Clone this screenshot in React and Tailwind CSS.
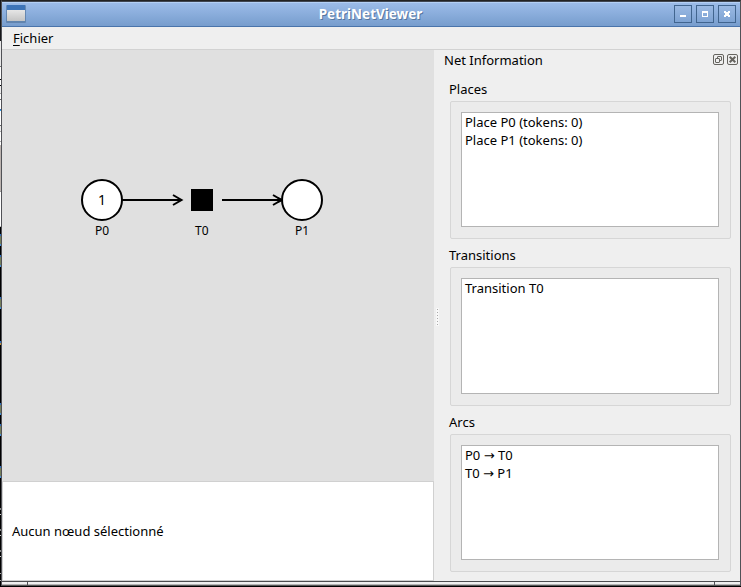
import React from "react";

// Slivers of the windows behind: [height, colour]
const BACKDROP = [
  [41, "#17171a"], [25, "#e8e8e8"], [1, "#777"], [12, "#fff"], [1, "#000"], [5, "#fff"], [1, "#000"],
  [7, "#eee"], [1, "#aaa"], [5, "#fff"], [1, "#666"], [9, "#fff"], [1, "#2f6fb8"], [1, "#35a5f0"], [14, "#fff"],
  [1, "#666"], [5, "#eee"], [1, "#aaa"], [9, "#fff"], [1, "#aaa"], [3, "#fff"], [46, "#bcb4b0"], [1, "#999"],
  [34, "#fff"], [1, "#bbb"], [7, "#000"], [2, "#2f6fc0"], [8, "#77805c"], [2, "#4a90d8"], [9, "#000"],
  [2, "#2f6fc0"], [8, "#77805c"], [2, "#4a90d8"], [30, "#000"], [2, "#2f6fc0"], [8, "#77805c"], [2, "#4a90d8"],
  [32, "#000"], [2, "#2f6fc0"], [2, "#c09040"], [58, "#000"], [2, "#2f6fc0"], [8, "#77805c"], [2, "#4a90d8"],
  [9, "#000"], [2, "#2f6fc0"], [8, "#77805c"], [2, "#4a90d8"], [30, "#000"], [2, "#2f6fc0"], [8, "#77805c"],
  [2, "#4a90d8"], [30, "#000"], [2, "#888"], [4, "#000"], [1, "#ccc"], [14, "#000"], [2, "#888"], [4, "#000"],
  [1, "#ccc"], [14, "#000"], [2, "#888"], [4, "#000"], [1, "#ccc"], [16, "#000"], [1, "#aaa"], [6, "#000"], [1, "#aaa"],
];

function TitleButton({ children }) {
  return (
    <div className="h-[18px] w-[18px] border border-[#41658f] bg-linear-to-b from-[#9ab9e3] to-[#7ea3d3]">
      <svg width="16" height="16" viewBox="0 0 16 16" shapeRendering="crispEdges">{children}</svg>
    </div>
  );
}

function Group({ title, items, boxClass = "h-[138px] pb-[11px]" }) {
  return (
    <section>
      <h2 className="h-[20px] pl-[1px] text-[13px] leading-[16px]">{title}</h2>
      <div className={`ml-[2px] flex w-[281px] rounded-[2px] border border-[#d6d6d6] bg-[#ebebeb] pt-[10px] pl-[10px] ${boxClass}`}>
        <ul className="w-[258px] border border-[#b4b4b4] bg-white pl-[3px]">
          {items.map((item) => (
            <li key={item} className="h-[18px] text-[13px] leading-[18px]">{item}</li>
          ))}
        </ul>
      </div>
    </section>
  );
}

function NetCanvas() {
  return (
    <svg width="432" height="431" viewBox="2 50 432 431" className="block bg-[#e0e0e0]">
      <g stroke="#000" strokeWidth="2" fill="none">
        <path d="M122 200H181M173 195L181.500 200L173 205" />
        <path d="M222 200H281M273 195L281.500 200L273 205" />
        <circle cx="102" cy="200" r="20" fill="#fff" />
        <circle cx="302" cy="200" r="20" fill="#fff" />
        <path d="M278 198L281.500 200L278 202" />
      </g>
      <rect x="191" y="189" width="22" height="22" fill="#000" />
      <g textAnchor="middle" fill="#000">
        <text x="102" y="205" fontSize="14">1</text>
        <g fontSize="12">
          <text x="102" y="235">P0</text>
          <text x="201.800" y="235">T0</text>
          <text x="302" y="235">P1</text>
        </g>
      </g>
    </svg>
  );
}

export default function App() {
  return (
    <div className="flex h-[587px] w-[741px] overflow-hidden bg-black font-['Noto_Sans','DejaVu_Sans',sans-serif] text-[13px] text-black">
      <div className="w-px shrink-0">
        {BACKDROP.map(([height, backgroundColor], i) => (
          <div key={i} style={{ height, backgroundColor }} />
        ))}
      </div>
      <div className="h-[586px] w-[740px] border-x border-t border-x-[#505156] border-t-[#222]">
        <header className="flex h-[26px] items-center border-t border-b border-t-[#3f4652] border-b-[#4a74ab] bg-linear-to-b from-[#9dbdea] to-[#779dcd] pr-[4px] pl-[4px] shadow-[inset_0_1px_0_#b4d0f5]">
          <svg width="20" height="20" viewBox="0 0 20 20">
            <defs>
              <linearGradient id="face" x2="0" y2="1">
                <stop stopColor="#e6e6e6" />
                <stop offset="1" stopColor="#c4c4c4" />
              </linearGradient>
            </defs>
            <rect x="0" y="1" width="20" height="18" rx="1" fill="#55779f" opacity=".7" />
            <rect x="1" y="1" width="18" height="5" fill="#3d74b8" />
            <rect x="1" y="6" width="18" height="11" fill="url(#face)" />
          </svg>
          <h1 className="flex-1 pl-[41px] text-center text-[13.500px] leading-[20px] font-bold text-white [text-shadow:1px_1px_0_#56779f]">PetriNetViewer</h1>
          <div className="flex gap-[4px]">
            <TitleButton><path d="M5 9h6v2H5z" fill="#fff" /></TitleButton>
            <TitleButton><path fillRule="evenodd" d="M5 5h6v6H5zM6 7v3h4V7z" fill="#fff" /></TitleButton>
            <TitleButton><path d="M5 5h2v1h2V5h2v2h-1v2h1v2H9v-1H7v1H5V9h1V7H5z" fill="#fff" /></TitleButton>
          </div>
        </header>
        <nav className="h-[23px] border-b border-[#d2d2d2] bg-[#efefef] pl-[11px] text-[13px] leading-[23px]">
          <span className="underline underline-offset-2">F</span>ichier
        </nav>
        <main className="flex h-[531px] bg-[#efefef]">
          <div className="w-[432px]">
            <NetCanvas />
            <div className="flex h-[100px] items-center border border-[#d0d0d0] bg-white pt-[1px] pl-[9px] text-[13px]">Aucun nœud sélectionné</div>
          </div>
          <div className="flex w-[8px] flex-col items-start justify-center gap-[2px] pt-[2px] pl-[3px]">
            {[0, 1, 2, 3, 4, 5].map((n) => <i key={n} className="h-px w-px bg-[#aaa] shadow-[0_0_0_1px_#f8f8f8]" />)}
          </div>
          <aside className="w-[298px] pl-[2px]">
            <div className="flex h-[20px] items-center text-[13px] leading-[20px]">
              <span className="flex-1">Net Information</span>
              <svg width="27" height="12" viewBox="0 0 27 12" fill="none" stroke="#66645f" className="mr-[1px]">
                <rect x="1.500" y=".5" width="10" height="10" rx="1.500" />
                <rect x="5.500" y="2.500" width="4" height="4" rx=".5" />
                <rect x="3.500" y="4.500" width="4" height="4" rx=".5" fill="#efefef" />
                <rect x="15.500" y=".5" width="10" height="10" rx="1.500" />
                <path d="M17.700 2.700l5.600 5.600M23.300 2.700l-5.600 5.600" strokeWidth="2" />
              </svg>
            </div>
            <div className="flex flex-col gap-[8px] pt-[11px] pl-[4px]">
              <Group title="Places" items={["Place P0 (tokens: 0)", "Place P1 (tokens: 0)"]} />
              <Group title="Transitions" items={["Transition T0"]} boxClass="h-[139px] pb-[11px]" />
              <Group title="Arcs" items={["P0 → T0", "T0 → P1"]} />
            </div>
          </aside>
        </main>
        <footer className="flex h-[5px] gap-px border-t border-b border-t-[#4c4d50] border-b-[#555] bg-[#505156]">
          <div className="w-[25px] border-b border-[#b5b5b5] bg-[#efefef]" />
          <div className="flex-1 border-b border-[#b5b5b5] bg-[#efefef]" />
          <div className="w-[25px] border-b border-[#b5b5b5] bg-[#efefef]" />
        </footer>
      </div>
    </div>
  );
}
